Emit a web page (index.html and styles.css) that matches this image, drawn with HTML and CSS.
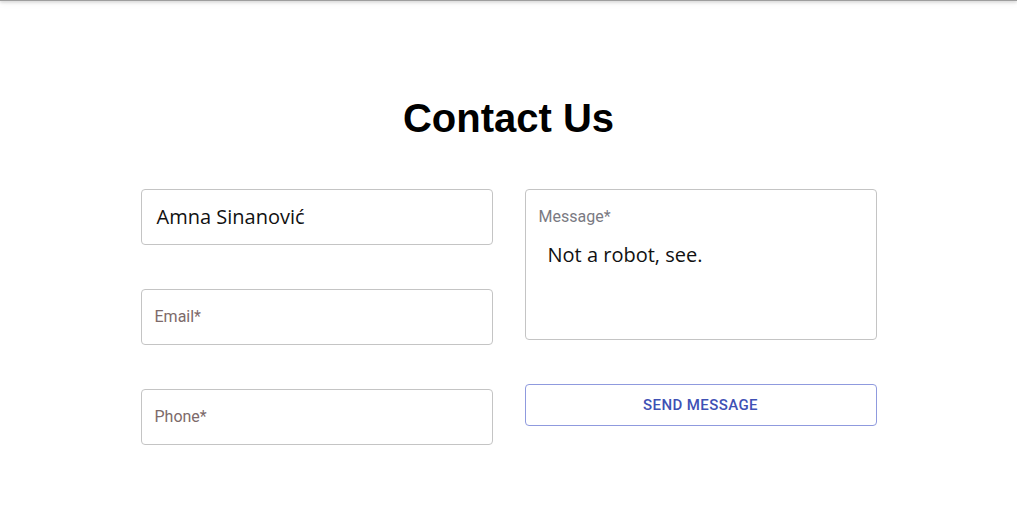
FILE: index.html
```html
<!DOCTYPE html>
<html>
<head>
<meta charset="utf-8">
<link rel="stylesheet" href="styles.css">
</head>
<body>
<header class="appbar"></header>
<main class="page">
  <h1 class="title">Contact Us</h1>
  <form class="form">
    <div class="col">
      <div class="field"><span class="value">Amna Sinanović</span></div>
      <div class="field"><span class="label label-warm">Email*</span></div>
      <div class="field"><span class="label label-warm">Phone*</span></div>
    </div>
    <div class="col">
      <div class="field field-multi">
        <span class="label label-small">Message*</span>
        <span class="value value-multi">Not a robot, see.</span>
      </div>
      <button type="button" class="send">Send Message</button>
    </div>
  </form>
</main>
</body>
</html>
```
FILE: styles.css
```css
html, body {
  margin: 0;
  padding: 0;
  background: #fff;
}
body {
  font-family: Roboto, "Noto Sans", sans-serif;
}
.appbar {
  height: 1px;
  background: #9e9e9e;
  box-shadow: 0 1px 3px rgba(0,0,0,0.35), 0 2px 6px rgba(0,0,0,0.15);
}
.page {
  display: flex;
  flex-direction: column;
  align-items: center;
}
.title {
  margin: 93px 0 0;
  font-family: "Liberation Sans", Arial, sans-serif;
  font-weight: 700;
  font-size: 40px;
  line-height: 48px;
  color: #000;
}
.form {
  margin-top: 47px;
  display: flex;
  gap: 32px;
}
.col {
  width: 352px;
  display: flex;
  flex-direction: column;
  gap: 44px;
}
.field {
  box-sizing: border-box;
  height: 56px;
  border: 1px solid #c4c4c4;
  border-radius: 4px;
  display: flex;
  align-items: center;
  padding: 0 13px;
}
.value {
  font-family: "Open Sans", "Noto Sans", sans-serif;
  font-size: 20px;
  color: #111;
  padding-left: 2px;
  margin-top: -2px;
}
.label {
  font-family: Roboto, sans-serif;
  font-size: 16px;
  color: #7d6a6a;
}
.label-warm {
  margin-top: -2px;
}
.field-multi {
  height: 151px;
  flex-direction: column;
  align-items: flex-start;
  padding: 17px 13px 0;
}
.label-small {
  font-size: 16px;
  color: #7a7a82;
  line-height: 20px;
}
.value-multi {
  margin-top: 14px;
  padding-left: 9px;
  line-height: 28px;
}
.send {
  box-sizing: border-box;
  height: 42px;
  width: 100%;
  background: #fff;
  border: 1px solid #8f9ade;
  border-radius: 4px;
  font-family: Roboto, sans-serif;
  font-weight: 500;
  font-size: 15px;
  letter-spacing: 0.4px;
  text-transform: uppercase;
  color: #3f51b5;
  cursor: pointer;
}
```
